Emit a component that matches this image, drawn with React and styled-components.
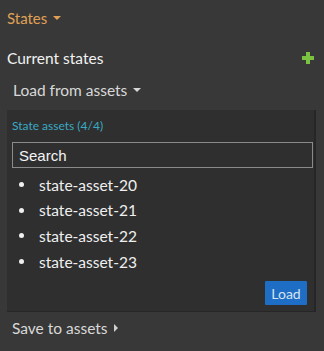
import React from 'react';
import styled, {createGlobalStyle} from 'styled-components';

const Global = createGlobalStyle`
    html, body {
        margin: 0;
        padding: 0;
        background: #383838;
    }
    body {
        font-family: Lato, "Open Sans", sans-serif;
    }
`;

const Page = styled.div`
    width: 324px;
    height: 351px;
    background: #383838;
    padding: 0 7px;
    box-sizing: border-box;
    overflow: hidden;
`;

const Caret = styled.span`
    display: inline-block;
    width: 0;
    height: 0;
    margin-left: 6px;
    border-left: 4px solid transparent;
    border-right: 4px solid transparent;
    border-top: 4px solid ${p => p.color};
    vertical-align: middle;
`;

const RightCaret = styled.span`
    display: inline-block;
    width: 0;
    height: 0;
    margin-left: 6px;
    border-top: 4px solid transparent;
    border-bottom: 4px solid transparent;
    border-left: 4px solid #cfcfcf;
    vertical-align: middle;
`;

const Title = styled.div`
    height: 35px;
    display: flex;
    align-items: center;
    color: #e0a055;
    font-size: 15px;
`;

const SectionRow = styled.div`
    height: 46px;
    display: flex;
    align-items: center;
    justify-content: space-between;
    color: #f2f2f2;
    font-size: 15.5px;
`;

const Plus = styled.svg`
    width: 12px;
    height: 12px;
    margin-right: 3px;
`;

const Toggle = styled.div`
    height: 18px;
    display: flex;
    align-items: center;
    padding-left: 6px;
    color: #d8d8d8;
    font-size: 15.5px;
`;

const Panel = styled.div`
    margin-top: 11px;
    width: 309px;
    height: 202px;
    box-sizing: border-box;
    background: #2f2f2f;
    box-shadow: inset -2px -1px 0 #262626;
    padding: 8px 5px 0 5px;
    display: flex;
    flex-direction: column;
`;

const PanelLabel = styled.div`
    color: #3ba9c2;
    font-size: 12px;
    height: 16px;
    line-height: 16px;
`;

const SearchInput = styled.input`
    margin-top: 8px;
    width: 301px;
    height: 26px;
    box-sizing: border-box;
    background: transparent;
    border: 1px solid #8a8a8a;
    color: #f4f4f4;
    font-family: "Liberation Sans", Arial, sans-serif;
    font-size: 15px;
    padding: 0 6px;
    outline: none;

    &::placeholder {
        color: #f4f4f4;
    }
`;

const List = styled.ul`
    list-style: none;
    margin: 4px 0 0 0;
    padding: 0;
`;

const Item = styled.li`
    height: 25.6px;
    display: flex;
    align-items: center;
    color: #efefef;
    font-size: 15.5px;

    &::before {
        content: '';
        width: 5px;
        height: 5px;
        border-radius: 50%;
        background: #efefef;
        margin: 0 15px 0 7px;
    }
`;

const Footer = styled.div`
    margin-top: auto;
    margin-bottom: 7px;
    display: flex;
    justify-content: flex-end;
    padding-right: 4px;
`;

const LoadButton = styled.button`
    width: 42px;
    height: 24px;
    background: #1f6ec6;
    border: none;
    border-radius: 1px;
    color: #d6e2f0;
    font-family: Lato, sans-serif;
    font-size: 14px;
    padding: 0;
`;

const SaveRow = styled.div`
    height: 32px;
    display: flex;
    align-items: center;
    padding-left: 5px;
    color: #d8d8d8;
    font-size: 15.5px;
`;

const assets = ['state-asset-20', 'state-asset-21', 'state-asset-22', 'state-asset-23'];

const App = () => {
    return (
        <Page>
            <Global />
            <Title>States<Caret color="#e0a055" /></Title>
            <SectionRow>
                <span>Current states</span>
                <Plus viewBox="0 0 12 12">
                    <rect x="4" y="0" width="4" height="12" fill="#7cc242" />
                    <rect x="0" y="4" width="12" height="4" fill="#7cc242" />
                </Plus>
            </SectionRow>
            <Toggle>Load from assets<Caret color="#d8d8d8" /></Toggle>
            <Panel>
                <PanelLabel>State assets (4/4)</PanelLabel>
                <SearchInput placeholder="Search" />
                <List>
                    {assets.map(a => <Item key={a}>{a}</Item>)}
                </List>
                <Footer>
                    <LoadButton>Load</LoadButton>
                </Footer>
            </Panel>
            <SaveRow>Save to assets<RightCaret /></SaveRow>
        </Page>
    );
};

export default App;
